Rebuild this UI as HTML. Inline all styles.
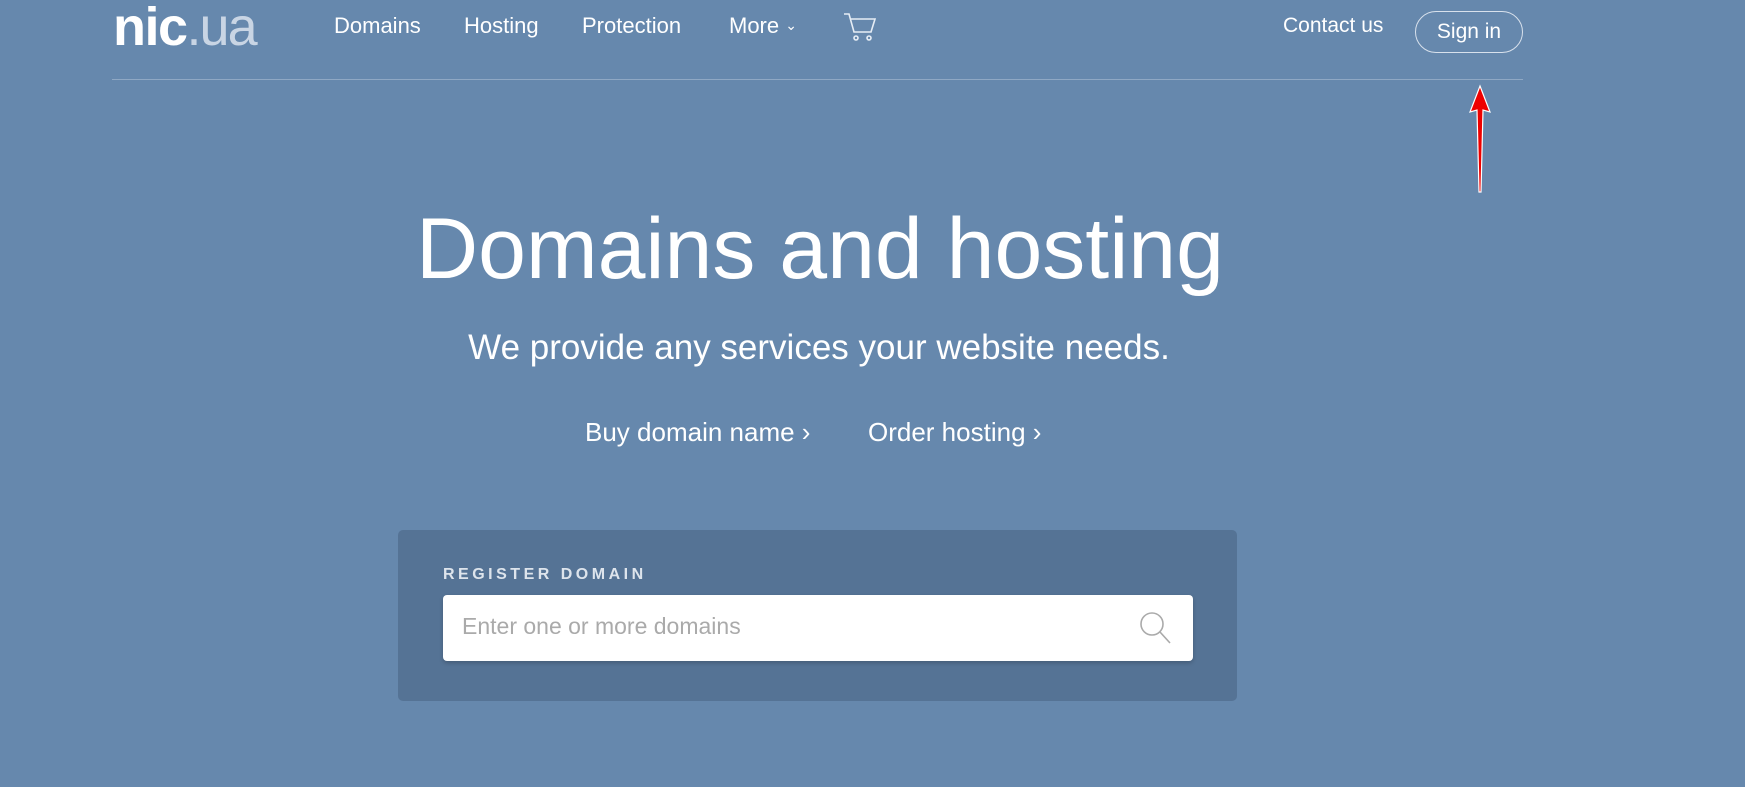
<!DOCTYPE html>
<html><head><meta charset="utf-8">
<style>
html,body{margin:0;padding:0;width:1745px;height:787px;overflow:hidden;background:#6688ad;font-family:"Liberation Sans",sans-serif;color:#fff;}
.abs{position:absolute;white-space:nowrap;}
.nav{font-size:22px;top:13px;}
</style></head><body>
<div class="abs" style="left:113px;top:-4px;font-size:54px;font-weight:bold;letter-spacing:-1.5px;">nic<span style="font-weight:normal;color:#c9d5e4;letter-spacing:-2px;">.ua</span></div>
<div class="abs nav" style="left:334px;">Domains</div>
<div class="abs nav" style="left:464px;">Hosting</div>
<div class="abs nav" style="left:582px;">Protection</div>
<div class="abs nav" style="left:729px;">More <span style="font-size:14px;position:relative;top:-3px;">&#8964;</span></div>
<svg class="abs" style="left:843px;top:12px" width="34" height="32" viewBox="0 0 34 32" fill="none" stroke="#e6edf5" stroke-width="1.6"><path d="M1 2h5l5 18h17l4-13H8"/><circle cx="13" cy="26" r="2"/><circle cx="26" cy="26" r="2"/></svg>
<div class="abs" style="left:1283px;top:14px;font-size:21px;">Contact us</div>
<div class="abs" style="left:1415px;top:11px;width:106px;height:40px;border:1px solid #d8e1ec;border-radius:21px;text-align:center;line-height:40px;font-size:21px;">Sign in</div>
<div class="abs" style="left:112px;top:79px;width:1411px;height:1px;background:#8fa8c4;"></div>
<svg class="abs" style="left:1462px;top:82px" width="36" height="114"><path d="M18 4 L28 30 L21 28 L19 110 L17 110 L15 28 L8 30 Z" fill="#ee0000" stroke="#fff" stroke-width="1.2"/></svg>
<div class="abs" style="left:0;width:1640px;text-align:center;top:200px;font-size:86px;font-weight:300;">Domains and hosting</div>
<div class="abs" style="left:0;width:1638px;text-align:center;top:328px;font-size:35px;">We provide any services your website needs.</div>
<div class="abs" style="left:585px;top:417px;font-size:26px;">Buy domain name ›</div>
<div class="abs" style="left:868px;top:417px;font-size:26px;">Order hosting ›</div>
<div class="abs" style="left:398px;top:530px;width:839px;height:171px;background:#557395;border-radius:5px;"></div>
<div class="abs" style="left:443px;top:566px;font-size:16px;font-weight:bold;letter-spacing:3.5px;color:#dde4ec;">REGISTER DOMAIN</div>
<div class="abs" style="left:443px;top:595px;width:750px;height:66px;background:#fff;border-radius:4px;box-shadow:0 2px 4px rgba(0,0,0,.2);"></div>
<div class="abs" style="left:462px;top:613px;font-size:23px;color:#aaa;">Enter one or more domains</div>
<svg class="abs" style="left:1139px;top:611px" width="34" height="34" fill="none" stroke="#aaa" stroke-width="1.6"><circle cx="13" cy="13" r="11"/><path d="M21 21l10 11"/></svg>
</body></html>
